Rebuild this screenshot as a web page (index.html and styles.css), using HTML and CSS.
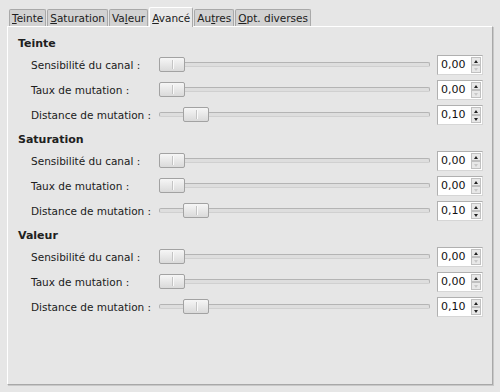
FILE: index.html
```html
<!DOCTYPE html>
<html lang="fr">
<head>
    <meta charset="UTF-8">
    <title>Options avancées</title>
    <link rel="stylesheet" href="styles.css">
</head>
<body>
    <div class="tabs">
        <span class="tab"><u>T</u>einte</span>
        <span class="tab"><u>S</u>aturation</span>
        <span class="tab">Va<u>l</u>eur</span>
        <span class="tab active"><u>A</u>vancé</span>
        <span class="tab">Au<u>t</u>res</span>
        <span class="tab"><u>O</u>pt. diverses</span>
    </div>

    <div class="panel">
        <div class="section">
            <div class="heading">Teinte</div>
            <div class="row">
                <span class="label">Sensibilité du canal :</span>
                <div class="slider"><div class="groove"></div><div class="handle"></div></div>
                <div class="spin"><span class="val">0,00</span><span class="arrows"><i class="up"></i><i class="down off"></i></span></div>
            </div>
            <div class="row">
                <span class="label">Taux de mutation :</span>
                <div class="slider"><div class="groove"></div><div class="handle"></div></div>
                <div class="spin"><span class="val">0,00</span><span class="arrows"><i class="up"></i><i class="down off"></i></span></div>
            </div>
            <div class="row">
                <span class="label">Distance de mutation :</span>
                <div class="slider"><div class="groove"></div><div class="handle" style="left: 24px"></div></div>
                <div class="spin"><span class="val">0,10</span><span class="arrows"><i class="up"></i><i class="down"></i></span></div>
            </div>
        </div>

        <div class="section">
            <div class="heading">Saturation</div>
            <div class="row">
                <span class="label">Sensibilité du canal :</span>
                <div class="slider"><div class="groove"></div><div class="handle"></div></div>
                <div class="spin"><span class="val">0,00</span><span class="arrows"><i class="up"></i><i class="down off"></i></span></div>
            </div>
            <div class="row">
                <span class="label">Taux de mutation :</span>
                <div class="slider"><div class="groove"></div><div class="handle"></div></div>
                <div class="spin"><span class="val">0,00</span><span class="arrows"><i class="up"></i><i class="down off"></i></span></div>
            </div>
            <div class="row">
                <span class="label">Distance de mutation :</span>
                <div class="slider"><div class="groove"></div><div class="handle" style="left: 24px"></div></div>
                <div class="spin"><span class="val">0,10</span><span class="arrows"><i class="up"></i><i class="down"></i></span></div>
            </div>
        </div>

        <div class="section">
            <div class="heading">Valeur</div>
            <div class="row">
                <span class="label">Sensibilité du canal :</span>
                <div class="slider"><div class="groove"></div><div class="handle"></div></div>
                <div class="spin"><span class="val">0,00</span><span class="arrows"><i class="up"></i><i class="down off"></i></span></div>
            </div>
            <div class="row">
                <span class="label">Taux de mutation :</span>
                <div class="slider"><div class="groove"></div><div class="handle"></div></div>
                <div class="spin"><span class="val">0,00</span><span class="arrows"><i class="up"></i><i class="down off"></i></span></div>
            </div>
            <div class="row">
                <span class="label">Distance de mutation :</span>
                <div class="slider"><div class="groove"></div><div class="handle" style="left: 24px"></div></div>
                <div class="spin"><span class="val">0,10</span><span class="arrows"><i class="up"></i><i class="down"></i></span></div>
            </div>
        </div>
    </div>
</body>
</html>
```

FILE: styles.css
```css
body{
    margin: 0;
    width: 500px;
    height: 392px;
    background: #e6e6e6;
    font-family: "DejaVu Sans", sans-serif;
    font-size: 10.5px;
    color: #202020;
}
.tabs{
    display: flex;
    align-items: flex-end;
    height: 26px;
    padding-left: 9px;
}
.tab{
    height: 16px;
    line-height: 16px;
    padding: 0 2px;
    margin-right: 1px;
    background: #d2d2d2;
    border: 1px solid #a9a9a9;
    border-bottom: none;
    border-radius: 2px 2px 0 0;
}
.tab u{
    text-decoration-thickness: 1px;
}
.active{
    height: 19px;
    line-height: 20px;
    background: #e8e8e8;
    border-color: #ffffff #a9a9a9 #e8e8e8 #ffffff;
    position: relative;
    top: 1px;
}
.panel{
    margin: 0 7px;
    height: 348px;
    padding: 9px 9px 0 10px;
    background: #e6e6e6;
    border: 1px solid #ffffff;
    border-right-color: #a8a8a8;
    border-bottom-color: #a8a8a8;
    box-shadow: 1px 1px 0 #c8c8c8;
}
.section{
    margin-bottom: 5px;
}
.heading{
    height: 16px;
    line-height: 16px;
    font-weight: bold;
    font-size: 11px;
}
.row{
    display: grid;
    grid-template-columns: 121px 271px 46px;
    column-gap: 7px;
    align-items: center;
    height: 25px;
    padding-left: 13px;
}
.label{
    white-space: nowrap;
}
.slider{
    position: relative;
    height: 15px;
}
.groove{
    position: absolute;
    left: 0;
    right: 0;
    top: 5px;
    height: 3px;
    background: #dedede;
    border: 1px solid #b4b4b4;
    border-bottom-color: #d0d0d0;
    border-radius: 2px;
}
.handle{
    position: absolute;
    left: 0;
    top: 0;
    width: 24px;
    height: 13px;
    border: 1px solid #a2a2a2;
    border-radius: 2px;
    background: linear-gradient(#f6f6f6, #dadada);
}
.handle::after{
    content: "";
    position: absolute;
    left: 12px;
    top: 2px;
    width: 1px;
    height: 9px;
    background: #c4c4c4;
    box-shadow: 1px 0 0 #fafafa;
}
.spin{
    display: flex;
    height: 18px;
    background: #ffffff;
    border: 1px solid #b0b0b0;
    border-right-color: #d6d6d6;
    border-bottom-color: #d6d6d6;
}
.val{
    flex: 1;
    line-height: 18px;
    padding-left: 3px;
    font-size: 11px;
    color: #111;
}
.arrows{
    display: flex;
    flex-direction: column;
    width: 10px;
    margin: 1px 1px 1px 0;
}
.arrows i{
    flex: 1;
    background: #e8e8e8;
    border: 1px solid #c0c0c0;
    position: relative;
}
.arrows i::after{
    content: "";
    position: absolute;
    left: 2px;
    border-left: 2px solid transparent;
    border-right: 2px solid transparent;
}
.up::after{
    top: 2px;
    border-bottom: 3px solid #222;
}
.down::after{
    top: 2px;
    border-top: 3px solid #222;
}
.down.off::after{
    border-top-color: #c8c8c8;
}
```
